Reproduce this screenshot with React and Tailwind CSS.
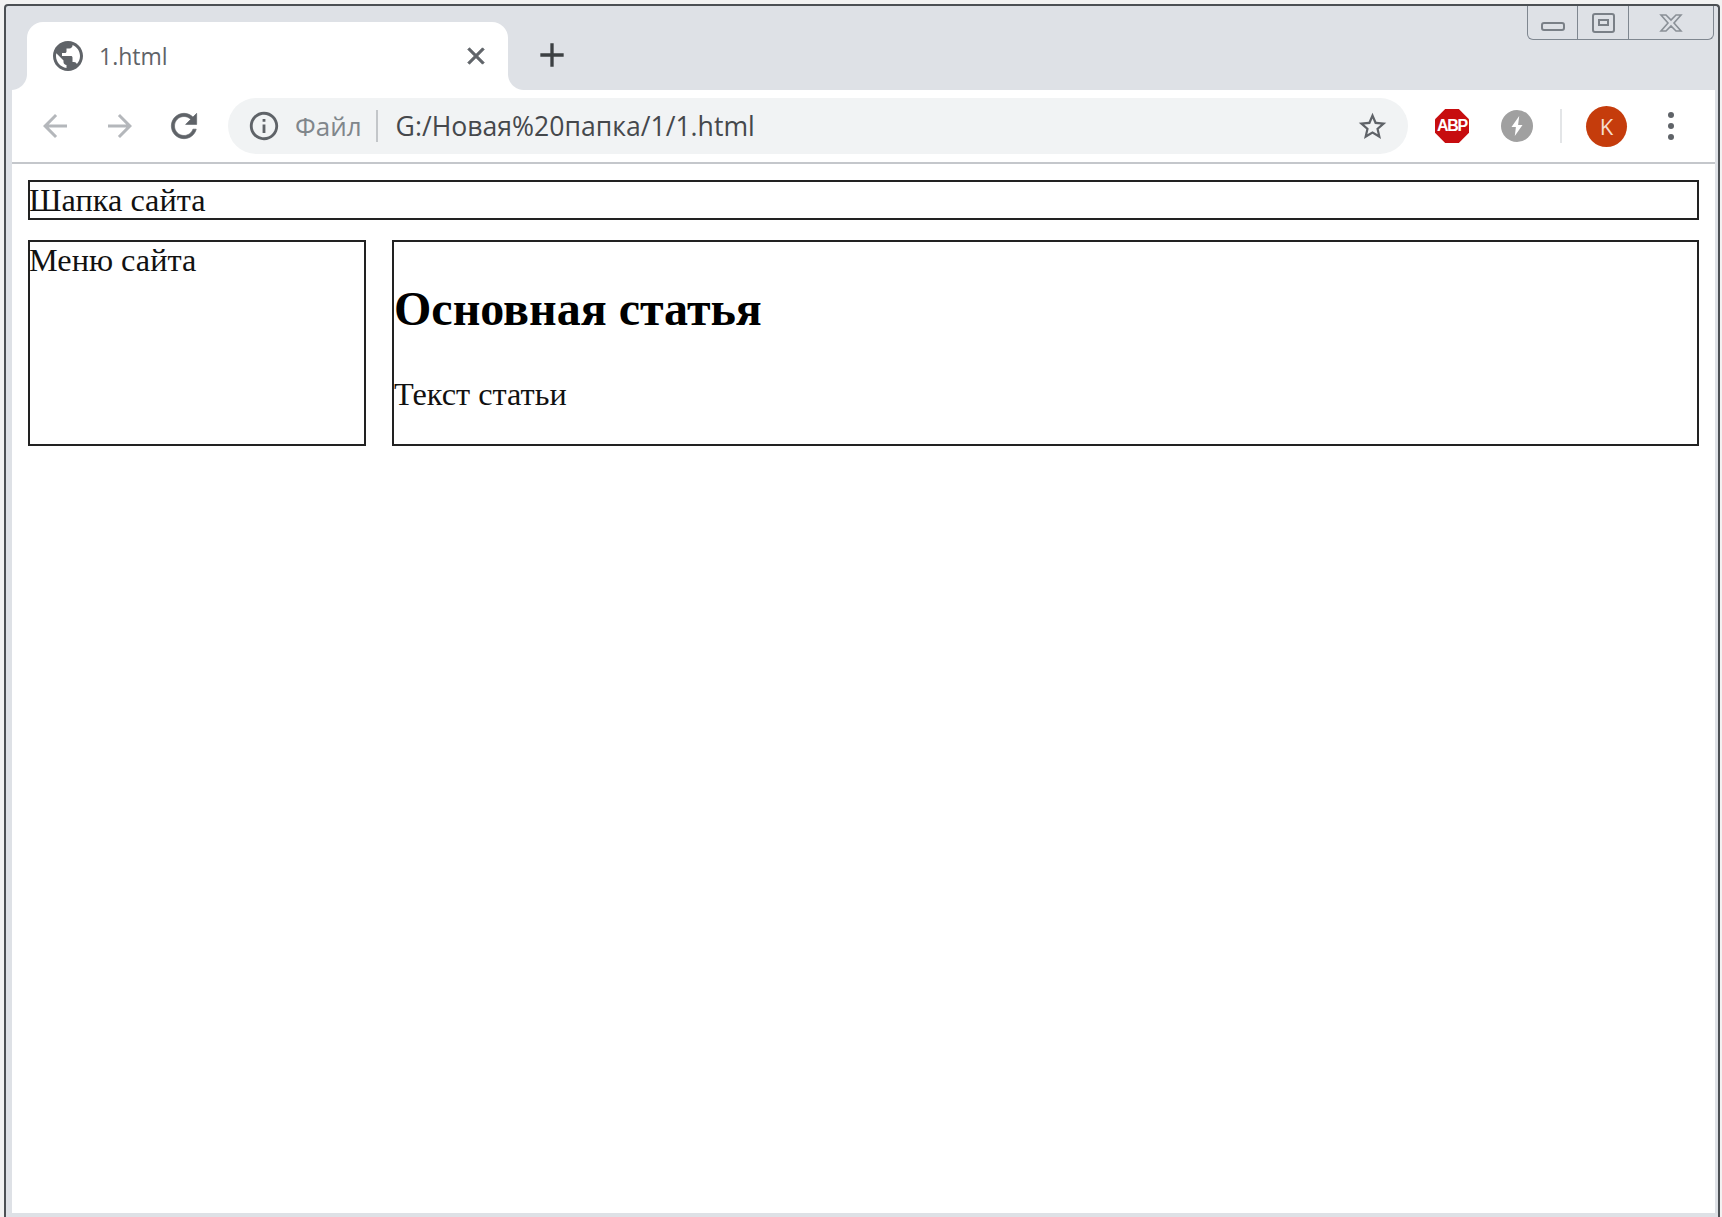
import React from "react";

const Icon = ({ d, className, strokeWidth = 0 }) => (
  <svg viewBox="0 0 24 24" className={className} fill="currentColor" stroke="currentColor" strokeWidth={strokeWidth} aria-hidden="true">
    <path d={d} />
  </svg>
);

const paths = {
  globe:
    "M12 2C6.48 2 2 6.48 2 12s4.48 10 10 10 10-4.48 10-10S17.52 2 12 2zm-1 17.93c-3.95-.49-7-3.85-7-7.93 0-.62.08-1.21.21-1.79L9 15v1c0 1.1.9 2 2 2v1.93zm6.9-2.54c-.26-.81-1-1.39-1.9-1.39h-1v-3c0-.55-.45-1-1-1H8v-2h2c.55 0 1-.45 1-1V7h2c1.1 0 2-.9 2-2v-.41c2.93 1.19 5 4.06 5 7.41 0 2.08-.8 3.97-2.1 5.39z",
  back: "M20 11H7.83l5.59-5.59L12 4l-8 8 8 8 1.41-1.41L7.83 13H20v-2z",
  forward: "M12 4l-1.41 1.41L16.17 11H4v2h12.17l-5.58 5.59L12 20l8-8z",
  reload:
    "M17.65 6.35C16.2 4.9 14.21 4 12 4c-4.42 0-7.99 3.58-7.99 8s3.57 8 7.99 8c3.73 0 6.84-2.55 7.73-6h-2.08c-.82 2.33-3.04 4-5.65 4-3.31 0-6-2.69-6-6s2.69-6 6-6c1.66 0 3.14.69 4.22 1.78L13 11h7V4l-2.35 2.35z",
  info: "M11 7h2v2h-2zm0 4h2v6h-2zm1-9C6.48 2 2 6.48 2 12s4.48 10 10 10 10-4.48 10-10S17.52 2 12 2zm0 18c-4.41 0-8-3.59-8-8s3.59-8 8-8 8 3.59 8 8-3.59 8-8 8z",
  star: "M22 9.24l-7.19-.62L12 2 9.19 8.63 2 9.24l5.46 4.73L5.82 21 12 17.27 18.18 21l-1.63-7.03L22 9.24zM12 15.4l-3.76 2.27 1-4.28-3.32-2.88 4.38-.38L12 6.1l1.71 4.04 4.38.38-3.32 2.88 1 4.28L12 15.4z",
  close:
    "M19 6.41L17.59 5 12 10.59 6.41 5 5 6.41 10.59 12 5 17.59 6.41 19 12 13.41 17.59 19 19 17.59 13.41 12z",
  plus: "M19 13h-6v6h-2v-6H5v-2h6V5h2v6h6v2z",
};

// Aero caption buttons that sit over the tab strip
function WindowControls() {
  return (
    <div className="absolute top-0 right-[4px] flex h-[34px] w-[187px] rounded-b-[6px] border border-t-0 border-[#7f8790] text-[#6d747b]">
      <div className="flex w-[50px] items-center justify-center border-r border-[#7f8790] pt-[8px]">
        <div className="h-[9px] w-[24px] rounded-[3px] border-2 border-[#7a8087]" />
      </div>
      <div className="flex w-[51px] items-center justify-center border-r border-[#7f8790]">
        <div className="flex h-[20px] w-[23px] items-center justify-center rounded-[3px] border-2 border-[#7a8087]">
          <div className="h-[7px] w-[11px] border-2 border-[#7a8087]" />
        </div>
      </div>
      <div className="flex flex-1 items-center justify-center">
        <svg viewBox="0 0 24 20" className="h-[20px] w-[24px]" fill="none" stroke="#8a9097" strokeWidth="1.6" aria-hidden="true">
          <path d="M2 2h5l5 5 5-5h5l-7 8 7 8h-5l-5-5-5 5H2l7-8z" />
        </svg>
      </div>
    </div>
  );
}

function Tab() {
  return (
    <div className="relative flex h-[68px] w-[481px] items-center rounded-t-[16px] bg-white pl-[23px] pr-[20px]">
      <span className="absolute bottom-0 -left-[16px] h-[16px] w-[16px] bg-[radial-gradient(circle_at_0_0,#dee1e6_15.5px,#ffffff_16.5px)]" />
      <span className="absolute bottom-0 -right-[16px] h-[16px] w-[16px] bg-[radial-gradient(circle_at_100%_0,#dee1e6_15.5px,#ffffff_16.5px)]" />
      <Icon d={paths.globe} className="h-[36px] w-[36px] shrink-0 text-[#5f6368]" />
      <span className="ml-[13px] flex-1 text-[23px] leading-none text-[#5f6368]">1.html</span>
      <Icon d={paths.close} strokeWidth={0.8} className="mr-[-2px] h-[28px] w-[28px] text-[#5f6368]" />
    </div>
  );
}

function Toolbar() {
  return (
    <div className="flex h-[74px] items-center border-b-2 border-[#c4c7cb] bg-white">
      <Icon d={paths.back} className="ml-[25px] h-[36px] w-[36px] text-[#b4b7bb]" />
      <Icon d={paths.forward} className="ml-[29px] h-[36px] w-[36px] text-[#b4b7bb]" />
      <Icon d={paths.reload} strokeWidth={0.4} className="ml-[27px] h-[38px] w-[38px] text-[#5f6368]" />
      <div className="ml-[25px] flex h-[56px] w-[1180px] items-center rounded-full bg-[#f1f3f4] pl-[19px]">
        <Icon d={paths.info} className="h-[34px] w-[34px] shrink-0 text-[#5f6368]" />
        <span className="ml-[14px] text-[26px] leading-none text-[#80868b]">Файл</span>
        <span className="ml-[14px] h-[32px] w-[2px] bg-[#c3c6c9]" />
        <span className="ml-[18px] flex-1 text-[26.6px] leading-none text-[#45484c]">G:/Новая%20папка/1/1.html</span>
        <Icon d={paths.star} className="mr-[19px] h-[33px] w-[33px] text-[#5f6368]" />
      </div>
      <div className="ml-[27px] flex h-[34px] w-[34px] items-center justify-center bg-[#c70d0f] [clip-path:polygon(30%_0,70%_0,100%_30%,100%_70%,70%_100%,30%_100%,0_70%,0_30%)]">
        <span className="font-['Liberation_Sans',sans-serif] text-[16px] leading-none font-bold tracking-[-1.2px] text-white">ABP</span>
      </div>
      <div className="ml-[32px] flex h-[32px] w-[32px] items-center justify-center rounded-full bg-[#a0a0a0]">
        <svg viewBox="0 0 16 20" className="h-[22px] w-[18px]" fill="#ffffff" aria-hidden="true">
          <path d="M10 1L3 11h4l-1 8 7-10H9z" />
        </svg>
      </div>
      <span className="ml-[27px] h-[34px] w-[2px] bg-[#e3e5e7]" />
      <div className="ml-[24px] flex h-[41px] w-[41px] items-center justify-center rounded-full bg-[#c53c0c] text-[22px] leading-none text-[#f5dcd0]">
        K
      </div>
      <div className="ml-[41px] flex flex-col gap-[5px]">
        <span className="h-[6px] w-[6px] rounded-full bg-[#5f6368]" />
        <span className="h-[6px] w-[6px] rounded-full bg-[#5f6368]" />
        <span className="h-[6px] w-[6px] rounded-full bg-[#5f6368]" />
      </div>
    </div>
  );
}

export default function App() {
  return (
    <div className="h-[1217px] w-[1722px] overflow-hidden bg-[#f2f2f2] pt-[4px] pr-[2px] pl-[4px] font-['Open_Sans',sans-serif]">
      <div className="relative flex h-[1213px] flex-col rounded-t-[4px] border-t-2 border-r-2 border-l-2 border-[#4c5054] bg-[#dee1e6] pr-[3px] pb-[4px] pl-[6px]">
        <WindowControls />
        <div className="flex h-[84px] shrink-0 items-end pl-[15px]">
          <Tab />
          <Icon d={paths.plus} className="mb-[15px] ml-[24px] h-[40px] w-[40px] text-[#3c4043]" />
        </div>
        <Toolbar />
        <main className="flex-1 bg-white px-[16px] pt-[16px] font-['Liberation_Serif',serif] text-[32.3px] leading-[36px] text-[#111111]">
          <header className="h-[40px] border-2 border-[#222222] indent-[-1px]">Шапка сайта</header>
          <div className="mt-[20px] flex h-[206px] gap-[26px]">
            <nav className="w-[338px] border-2 border-[#222222] indent-[-1px]">Меню сайта</nav>
            <article className="flex-1 border-2 border-[#222222]">
              <h1 className="mt-[41px] text-[48px] leading-[52px] font-bold text-black">Основная статья</h1>
              <p className="mt-[41px]">Текст статьи</p>
            </article>
          </div>
        </main>
      </div>
    </div>
  );
}
